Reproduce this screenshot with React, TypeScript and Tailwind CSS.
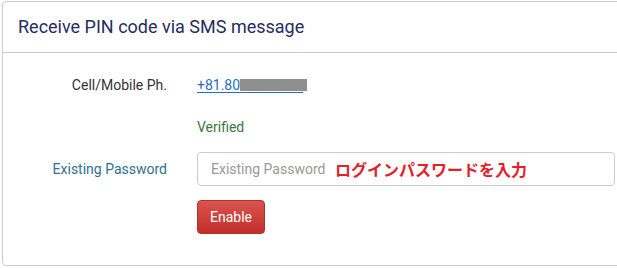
export default function App() {
  return (
    <div className="h-[268px] w-[617px] overflow-hidden bg-white pl-[2px] pt-[1px] font-['Roboto','Liberation_Sans',sans-serif]">
      <div className="h-[265px] w-[640px] rounded-[4px] border border-[#cccccc]">
        {/* Header */}
        <div className="flex h-[51px] items-center border-b border-[#cccccc] px-[15px]">
          <h3 className="text-[18px] leading-none text-[#272c5c]">Receive PIN code via SMS message</h3>
        </div>

        {/* Body */}
        <div className="flex flex-col pt-[22px] text-[14px]">
          <div className="flex h-[20px] items-center">
            <div className="w-[164px] text-right text-[#333333]">Cell/Mobile Ph.</div>
            <div className="pl-[30px]">
              <a href="#" className="relative text-[#2a6ebb] underline underline-offset-[2px]">
                +81.80<span className="text-transparent">00000000</span>
                <span className="absolute left-[43px] top-[2px] h-[12px] w-[67px] bg-[#8f8f8f]" />
              </a>
            </div>
          </div>

          <div className="mt-[22px] flex h-[20px] items-center">
            <div className="w-[164px]" />
            <div className="pl-[30px] text-[#3c763d]">Verified</div>
          </div>

          <div className="mt-[15px] flex items-center">
            <div className="w-[164px] text-right text-[#31708f]">Existing Password</div>
            <div className="relative ml-[30px] w-[418px]">
              <input
                type="password"
                placeholder="Existing Password"
                className="h-[34px] w-full rounded-[4px] border border-[#cccccc] px-[13px] text-[14px] text-[#555] placeholder:text-[#999999] outline-none"
              />
              <span className="pointer-events-none absolute left-[138px] top-[7px] text-[16px] font-bold leading-[20px] text-[#e3212b] font-['Noto_Sans_CJK_JP',sans-serif]">
                ログインパスワードを入力
              </span>
            </div>
          </div>

          <div className="mt-[14px] flex">
            <div className="w-[164px]" />
            <div className="pl-[30px]">
              <button className="h-[34px] w-[68px] rounded-[4px] border border-[#b92c28] bg-gradient-to-b from-[#d9534f] to-[#c12e2a] text-[14px] text-white">
                Enable
              </button>
            </div>
          </div>
        </div>
      </div>
    </div>
  )
}
